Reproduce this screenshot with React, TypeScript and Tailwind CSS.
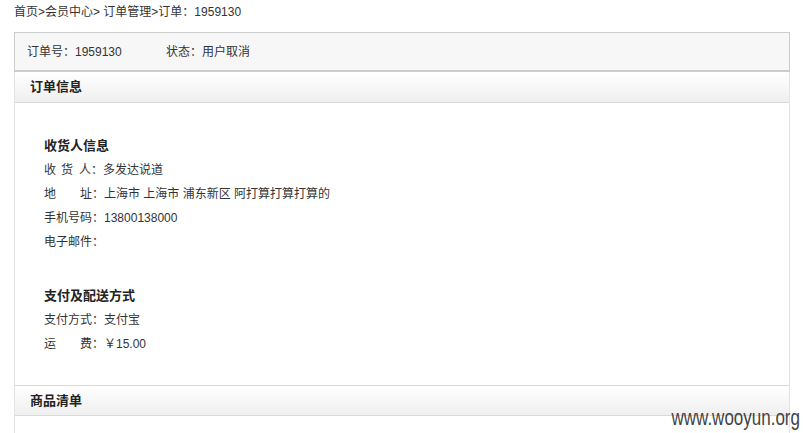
const font = '[font-family:Arial,"Liberation_Sans","Noto_Sans_CJK_SC",sans-serif]';

function SectionHeader({ title, first }: { title: string; first?: boolean }) {
  return (
    <div
      className={`h-[31px] border-b border-[#d9d9d9] bg-gradient-to-b from-white to-[#efefef] pl-[15px] leading-[30px] text-[13px] font-bold text-[#222] ${
        first ? '' : 'border-t'
      }`}
    >
      {title}
    </div>
  );
}

function Line({ label, value }: { label: React.ReactNode; value?: string }) {
  return (
    <div className="flex h-[24px] items-center">
      <span className="flex">{label}</span>
      <span>{value}</span>
    </div>
  );
}

export default function App() {
  return (
    <div className={`relative h-[433px] overflow-hidden bg-white text-[12px] text-[#333] ${font}`}>
      <div className="h-[24px] pl-[14px] leading-[24px]">首页&gt;会员中心&gt; 订单管理&gt;订单：1959130</div>

      <div className="mx-[14px] mt-[8px]">
        <div className="flex h-[40px] items-center border border-b-2 border-[#cccccc] bg-[#f7f7f7] pl-[12px]">
          <span className="w-[139px]">订单号：1959130</span>
          <span>状态：用户取消</span>
        </div>

        <div className="border-x border-[#e3e3e3]">
          <SectionHeader title="订单信息" first />
          <div className="pb-[29px] pl-[29px] pt-[31px]">
            <div className="h-[24px] leading-[24px] text-[13px] font-bold text-[#222]">收货人信息</div>
            <Line
              label={
                <>
                  <span className="w-[17px]">收</span>
                  <span className="w-[18px]">货</span>
                  <span>人：</span>
                </>
              }
              value="多发达说道"
            />
            <Line
              label={
                <>
                  <span className="w-[36px]">地</span>
                  <span>址：</span>
                </>
              }
              value="上海市 上海市 浦东新区 阿打算打算打算的"
            />
            <Line label="手机号码：" value="13800138000" />
            <Line label="电子邮件：" />

            <div className="mt-[30px] h-[24px] leading-[24px] text-[13px] font-bold text-[#222]">支付及配送方式</div>
            <Line label="支付方式：" value="支付宝" />
            <Line
              label={
                <>
                  <span className="w-[36px]">运</span>
                  <span>费：</span>
                </>
              }
              value="￥15.00"
            />
          </div>
          <SectionHeader title="商品清单" />
          <div className="h-[40px]" />
        </div>
      </div>

      <div className="absolute bottom-[3px] right-[4px] origin-bottom scale-y-[1.25] text-[17px] leading-[18px] text-[#444] [font-family:'Liberation_Sans',Arial,sans-serif]">
        www.wooyun.org
      </div>
    </div>
  );
}
